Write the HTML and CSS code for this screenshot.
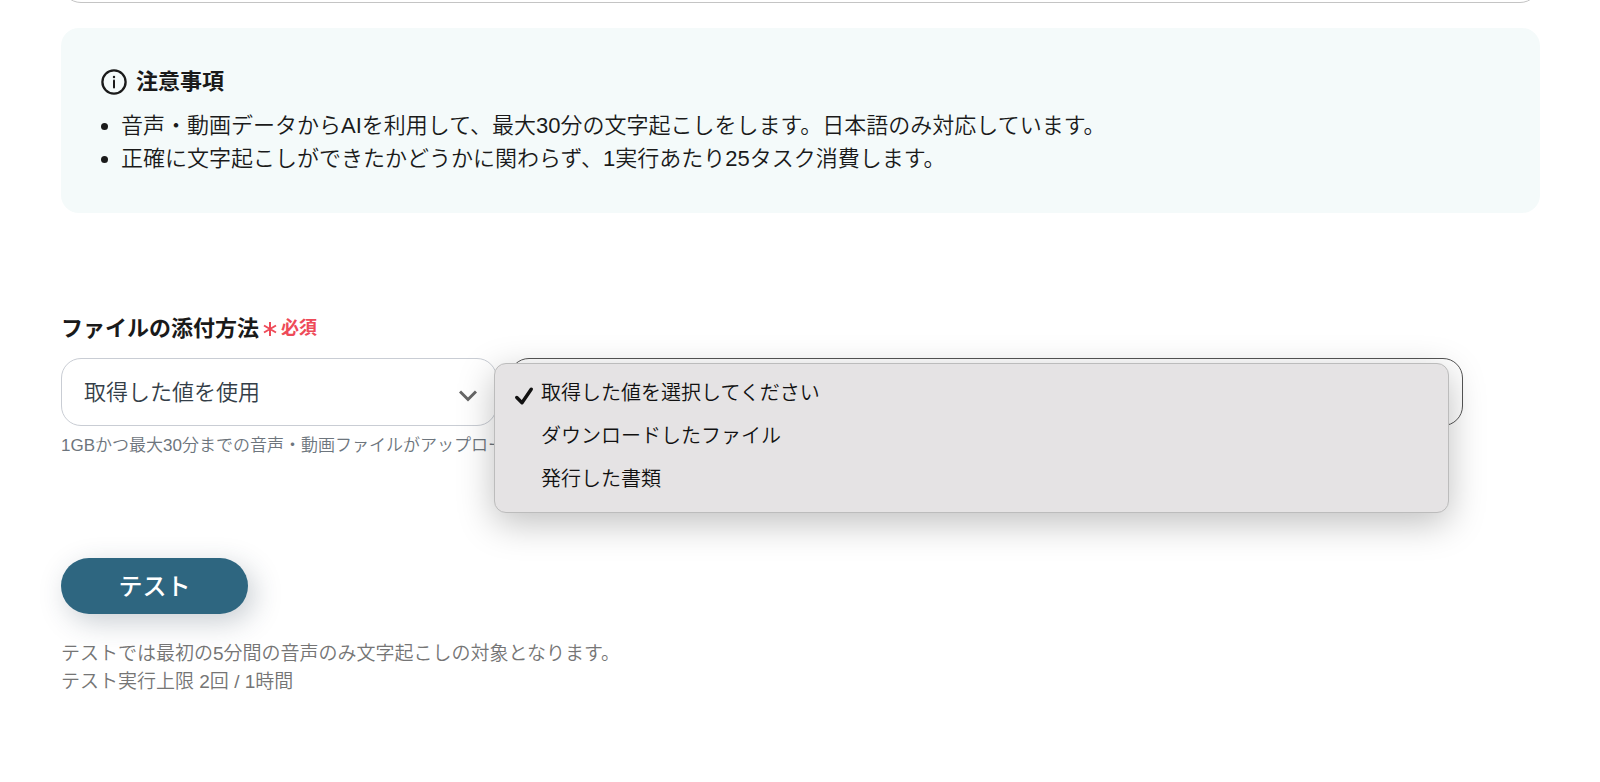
FILE: index.html
```html
<!DOCTYPE html>
<html lang="ja">
<head>
    <meta charset="UTF-8">
    <meta name="viewport" content="width=device-width, initial-scale=1.0">
    <title>文字起こし設定</title>
    <link rel="stylesheet" href="styles.css">
</head>
<body>
    <main class="container">
        <div class="previous-field"></div>

        <section class="notice">
            <h2 class="notice-title">
                <svg class="info-icon" viewBox="0 0 26 26" aria-hidden="true">
                    <circle cx="13" cy="13" r="11.6" fill="none" stroke="currentColor" stroke-width="2.3"/>
                    <circle cx="13" cy="8" r="1.2" fill="currentColor"/>
                    <path d="M13 11.5V18.5" stroke="currentColor" stroke-width="2" stroke-linecap="round"/>
                </svg>
                注意事項
            </h2>
            <ul class="notice-list">
                <li>音声・動画データからAIを利用して、最大30分の文字起こしをします。日本語のみ対応しています。</li>
                <li>正確に文字起こしができたかどうかに関わらず、1実行あたり25タスク消費します。</li>
            </ul>
        </section>

        <form class="form">
            <div class="field-label">
                <label for="attach-method">ファイルの添付方法</label>
                <svg class="required-icon" viewBox="0 0 14 14" aria-hidden="true">
                    <path d="M7 0V14M1 3.5L13 10.5M13 3.5L1 10.5" stroke="currentColor" stroke-width="2"/>
                </svg>
                <span class="required">必須</span>
            </div>
            <div class="select-row">
                <div class="select-box method">
                    <select id="attach-method">
                        <option>取得した値を使用</option>
                    </select>
                    <svg class="chevron" viewBox="0 0 18 12" aria-hidden="true">
                        <path d="M1 1.5L9 9.5L17 1.5" fill="none" stroke="currentColor" stroke-width="3"/>
                    </svg>
                </div>
                <div class="select-box value">
                    <select id="attach-value" aria-label="取得した値">
                        <option>取得した値を選択してください</option>
                    </select>
                    <ul class="menu" role="listbox" aria-label="取得した値">
                        <li role="option" aria-selected="true">
                            <svg class="check" viewBox="0 0 18 18" aria-hidden="true">
                                <path d="M1.8 10.5L7 15.7L16.2 2.2" fill="none" stroke="currentColor" stroke-width="3.4" stroke-linecap="round" stroke-linejoin="round"/>
                            </svg>
                            取得した値を選択してください
                        </li>
                        <li role="option">ダウンロードしたファイル</li>
                        <li role="option">発行した書類</li>
                    </ul>
                </div>
            </div>
            <p class="help">1GBかつ最大30分までの音声・動画ファイルがアップロード</p>

            <button type="button" class="test-button">テスト</button>
            <p class="test-note">テストでは最初の5分間の音声のみ文字起こしの対象となります。<br>テスト実行上限 2回 / 1時間</p>
        </form>
    </main>
</body>
</html>
```
FILE: styles.css
```css
* {
    box-sizing: border-box;
}
body {
    margin: 0;
    font-family: "Liberation Sans", "Noto Sans CJK JP", sans-serif;
    font-size: 22px;
    font-weight: 350;
    color: #1a1a1a;
    background: #fff;
}
h2, p, ul {
    margin: 0;
    padding: 0;
}
.container {
    padding: 0 60px 0 61px;
}

/* bottom edge of the field above */
.previous-field {
    height: 40px;
    margin-top: -37px;
    border: 1px solid #c4c4c4;
    border-radius: 20px;
}

.notice {
    margin-top: 25px;
    padding: 37px 40px 38px;
    background: #f4fafa;
    border-radius: 18px;
}
.notice-title {
    display: flex;
    align-items: center;
    gap: 9px;
    margin-bottom: 11px;
    font-size: 22px;
    line-height: 33px;
}
.info-icon {
    width: 26px;
    height: 26px;
}
.notice-list {
    padding-left: 20px;
    line-height: 33px;
}

.form {
    margin-top: 99px;
}
.field-label {
    display: flex;
    align-items: center;
    line-height: 33px;
    font-weight: bold;
}
.required-icon {
    width: 14px;
    height: 14px;
    margin: 0 4px;
    color: #ee4a58;
}
.required {
    font-size: 18px;
    color: #ee4a58;
}

.select-row {
    display: flex;
    gap: 12px;
    margin-top: 13px;
    padding-right: 77px;
}
.select-box {
    position: relative;
}
.method {
    flex: 0 0 436px;
}
.value {
    flex: 1;
}
.select-box select {
    display: block;
    width: 100%;
    height: 68px;
    padding: 0 60px 0 22px;
    font: inherit;
    color: #343e48;
    background: #fff;
    border: 1px solid #c9cdd4;
    border-radius: 20px;
    appearance: none;
}
.value select {
    border-color: #555;
}
.chevron {
    position: absolute;
    top: 32px;
    right: 20px;
    width: 18px;
    height: 12px;
    color: #666;
    pointer-events: none;
}

.menu {
    position: absolute;
    top: 5px;
    left: -15px;
    right: 14px;
    padding: 8px 0 11px;
    list-style: none;
    font-size: 20px;
    line-height: 43px;
    color: #111;
    background: #e5e3e4;
    border: 1px solid #bcbcbc;
    border-radius: 12px;
    box-shadow: 0 10px 36px rgba(0, 0, 0, 0.25);
}
.menu li {
    position: relative;
    padding-left: 46px;
}
.check {
    position: absolute;
    top: 15px;
    left: 20px;
    width: 18px;
    height: 18px;
}

.help {
    margin-top: 7px;
    font-size: 17px;
    line-height: 26px;
    color: #6d757d;
}
.test-button {
    display: block;
    width: 187px;
    height: 56px;
    margin-top: 99px;
    padding: 0 0 3px;
    font: inherit;
    font-size: 24px;
    font-weight: 500;
    color: #fff;
    background: #2e6680;
    border: none;
    border-radius: 28px;
    box-shadow: 6px 8px 28px rgba(40, 60, 80, 0.25);
    cursor: pointer;
}
.test-note {
    margin-top: 26px;
    font-size: 19px;
    line-height: 28px;
    color: #757575;
}
```
